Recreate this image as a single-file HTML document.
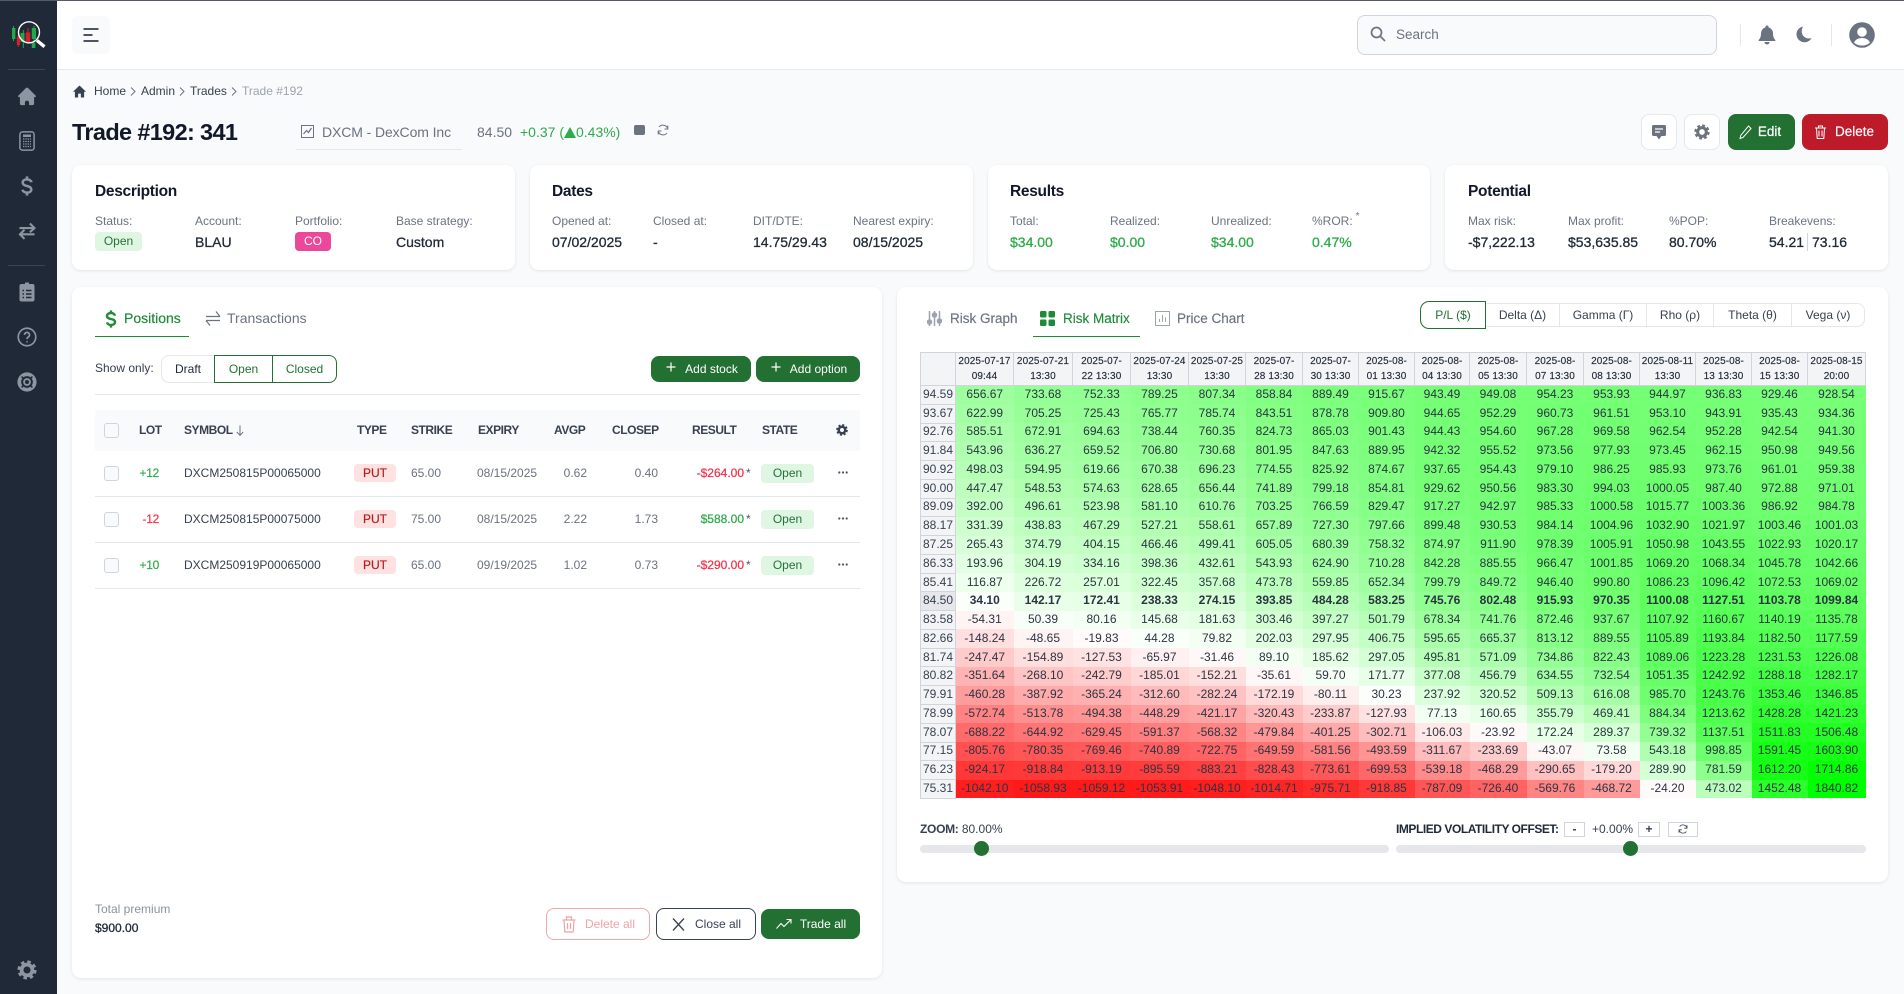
<!DOCTYPE html>
<html lang="en"><head><meta charset="utf-8"><title>Trade #192</title>
<style>
*{box-sizing:border-box}
html,body{margin:0;padding:0}
body{width:1904px;height:994px;overflow:hidden;position:relative;background:#f9fafb;font-family:"Liberation Sans",sans-serif;color:#1f2937;font-size:12px}
.a,.t,svg.i{position:absolute}
.t{white-space:nowrap;line-height:16px}
.card{position:absolute;background:#fff;border-radius:9px;box-shadow:0 1px 3px rgba(0,0,0,.09)}
.h{font-size:15.5px;font-weight:700;color:#111827;letter-spacing:-.3px}
.l{font-size:12px;color:#6b7280}
.v{font-size:14px;color:#1f2937;-webkit-text-stroke:.3px}
.g{color:#2eab4a}
.b{position:absolute;text-align:center;border-radius:4px;line-height:19px;height:19px;font-size:12px}
.open{background:#dff6e3;color:#25713a}
.btn{position:absolute;border-radius:8px;text-align:center;white-space:nowrap}
.th{font-size:12px;font-weight:700;color:#374151;letter-spacing:-.45px}
.sym{font-size:12px;color:#374151}
.mut{font-size:12px;color:#6b7280}
.cb{position:absolute;left:104px;width:15px;height:15px;border:1px solid #d1d5db;border-radius:3px;background:#f9fafb}
.ln{position:absolute;left:95px;width:765px;height:1px;background:#e5e7eb}
.seg{position:absolute;top:303px;height:24px;line-height:23px;text-align:center;font-size:12px;color:#374151;background:#fff;border:1px solid #e5e7eb;border-left:none}
.sq{position:absolute;top:822px;height:15px;border:1px solid #d1d5db;text-align:center;line-height:13px;font-size:12px;color:#374151;font-weight:700}
table{position:absolute;left:920px;top:352px;width:945px;table-layout:fixed;border-collapse:collapse}
th,td{padding:0;text-align:center;white-space:nowrap}
thead th{height:33px;font-size:10px;letter-spacing:.1px;line-height:15px;font-weight:400;background:#f3f4f6;border:1px solid #d1d5db;color:#1f2937;-webkit-text-stroke:.15px}
tbody tr{height:18.77px}
tbody th{font-size:12px;font-weight:400;background:#f3f4f6;border:1px solid #d1d5db;color:#374151;line-height:14px;padding-bottom:2px}
td{font-size:12px;line-height:14px;color:#2b3442;padding-bottom:2px}
tr.cur th{background:#e5e7eb}
tr.cur td{font-weight:700}
</style></head><body>

<div class="a" style="left:0;top:0;width:1904px;height:70px;background:#fff;border-bottom:1px solid #e5e7eb"></div>
<div class="a" style="left:0;top:0;width:1904px;height:1px;background:#555b66;z-index:5"></div>

<!-- sidebar -->
<div class="a" style="left:0;top:0;width:57px;height:994px;background:#1f2937"></div>
<svg class="i" style="left:0;top:0" width="57" height="60" viewBox="0 0 57 60">
<path d="M13.5 26v15" stroke="#22a846" stroke-width="1"/><rect x="12" y="28" width="3.4" height="11" fill="#22a846"/>
<path d="M18.3 34v13" stroke="#d81e2c" stroke-width="1"/><rect x="16.8" y="36.5" width="3.2" height="8.5" fill="#d81e2c"/>
<path d="M23.3 30v18" stroke="#22a846" stroke-width="1"/><rect x="20.5" y="33" width="4" height="9" fill="#22a846"/>
<path d="M28 28v16" stroke="#d81e2c" stroke-width="1"/><rect x="25.7" y="32.5" width="4.5" height="9.5" fill="#d81e2c"/>
<path d="M34 26v22" stroke="#22a846" stroke-width="1"/><rect x="31.8" y="28" width="4.2" height="11" fill="#22a846"/><rect x="31.8" y="43" width="3.6" height="5" fill="#22a846"/>
<circle cx="29" cy="32.3" r="10.5" fill="none" stroke="#fff" stroke-width="1.4"/>
<path d="M37 40.5l7.5 6.2" stroke="#fff" stroke-width="3.4"/>
</svg>
<div class="a" style="left:8px;top:69px;width:37px;height:1px;background:#3a4553"></div>
<div class="a" style="left:8px;top:265px;width:37px;height:1px;background:#3a4553"></div>

<svg class="i" style="left:17px;top:86px" width="20" height="20" viewBox="0 0 24 24" fill="#8d95a2"><path d="M10.6 2.6a2 2 0 0 1 2.8 0L23 12.2l-1.6 1.6-.9-.9V21a2 2 0 0 1-2 2h-4v-3a2.5 2.5 0 0 0-5 0v3h-4a2 2 0 0 1-2-2v-8.100l-.9.9L1 12.200z"/></svg>
<svg class="i" style="left:19px;top:131px" width="16" height="20" viewBox="0 0 16 20"><rect x=".9" y=".9" width="14.200" height="18.200" rx="2.500" fill="none" stroke="#8d95a2" stroke-width="1.500"/><rect x="4" y="3.500" width="8" height="2.500" fill="#8d95a2"/><path d="M4 8h8M4 10.500h8M4 13h8M4 15.500h8" stroke="#8d95a2" stroke-width="1.200" stroke-dasharray="1.400 .9"/></svg>
<svg class="i" style="left:17px;top:176px" width="20" height="20" viewBox="0 0 24 24" fill="none" stroke="#8d95a2" stroke-width="3"><path d="M17.500 7.500C17 5.500 14.500 4 12 4 9 4 6.800 5.600 6.800 8c0 2.600 2.400 3.400 5.200 4 2.800.6 5.200 1.400 5.200 4 0 2.400-2.200 4-5.200 4-2.500 0-5-1.500-5.500-3.500M12 .5V4M12 20v3.500"/></svg>
<svg class="i" style="left:17px;top:221px" width="20" height="20" viewBox="0 0 24 24" fill="none" stroke="#8d95a2" stroke-width="2.500"><path d="M3 8.500h18M15.500 3l5.500 5.500-5.500 5M21 16H3.500M9 10.500 3.500 16 9 21.500"/></svg>
<svg class="i" style="left:19px;top:282px" width="16" height="20" viewBox="0 0 16 20"><path d="M6 .5h4V2h3.500A2 2 0 0 1 15.500 4v13.500a2 2 0 0 1-2 2h-11a2 2 0 0 1-2-2V4a2 2 0 0 1 2-2H6z" fill="#8d95a2"/><path d="M3.500 8.500h1.500M7 8.500h5.500M3.500 12h1.500M7 12h5.500M3.500 15.500h1.500M7 15.500h5.500" stroke="#1f2937" stroke-width="1.500"/></svg>
<svg class="i" style="left:17px;top:327px" width="20" height="20" viewBox="0 0 24 24" fill="none" stroke="#8d95a2" stroke-width="2"><circle cx="12" cy="12" r="10.500"/><path d="M9 9.500a3 3 0 1 1 4.500 2.600c-1 .6-1.500 1.200-1.500 2.400M12 17v1.500"/></svg>
<svg class="i" style="left:17px;top:372px" width="20" height="20" viewBox="0 0 24 24"><circle cx="12" cy="12" r="11.500" fill="#8d95a2"/><circle cx="12" cy="12" r="5.800" fill="none" stroke="#1f2937" stroke-width="2.400"/><path d="M5.500 5.500l2 2M18.500 5.500l-2 2M5.500 18.500l2-2M18.500 18.500l-2-2" stroke="#1f2937" stroke-width="1.800"/><circle cx="12" cy="12" r="2.400" fill="#1f2937"/></svg>
<svg class="i" style="left:17px;top:960px" width="20" height="20" viewBox="0 0 24 24" fill="none" stroke="#8d95a2"><circle cx="12" cy="12" r="6.500" stroke-width="4.500"/><circle cx="12" cy="12" r="9.800" stroke-width="3.400" stroke-dasharray="4.200 3.500"/></svg>

<!-- header -->
<div class="a" style="left:72px;top:16px;width:38px;height:38px;background:#f9fafb;border-radius:6px"></div>
<svg class="i" style="left:83px;top:27px" width="17" height="16" viewBox="0 0 17 16" fill="none" stroke="#4b5563" stroke-width="2"><path d="M.5 2h15M.5 8h9M.5 14h15"/></svg>
<div class="a" style="left:1357px;top:15px;width:360px;height:40px;background:#f9fafb;border:1px solid #d1d5db;border-radius:8px"></div>
<svg class="i" style="left:1370px;top:26px" width="16" height="16" viewBox="0 0 16 16" fill="none" stroke="#6b7280" stroke-width="1.700"><circle cx="6.500" cy="6.500" r="5"/><path d="M10.200 10.200 15 15"/></svg>
<div class="t" style="left:1396px;top:26px;font-size:13.500px;line-height:17px;color:#6b7280">Search</div>
<div class="a" style="left:1740px;top:24px;width:1px;height:22px;background:#e5e7eb"></div>
<div class="a" style="left:1831px;top:24px;width:1px;height:22px;background:#e5e7eb"></div>
<svg class="i" style="left:1758px;top:25px" width="18" height="20" viewBox="0 0 18 20" fill="#6b7280"><path d="M9 .5a1.500 1.500 0 0 1 1.500 1.500v.4A6 6 0 0 1 15 8.300c0 3.500 1 5.400 2.300 6.700.4.400.2 1-.4 1H1.100c-.6 0-.8-.6-.4-1C2 13.700 3 11.800 3 8.300a6 6 0 0 1 4.500-5.900V2A1.500 1.500 0 0 1 9 .5z"/><path d="M6.500 17h5a2.500 2.500 0 0 1-5 0z"/></svg>
<svg class="i" style="left:1796px;top:26px" width="16" height="17" viewBox="0 0 16 17" fill="#6b7280"><path d="M7 .5C3.300 1.200.5 4.400.5 8.300c0 4.400 3.600 8 8 8 3 0 5.700-1.700 7-4.200-.8.300-1.700.4-2.600.4-4 0-7.200-3.300-7.200-7.300C5.700 3.500 6.200 1.900 7 .5z"/></svg>
<svg class="i" style="left:1849px;top:22px" width="26" height="26" viewBox="0 0 26 26"><circle cx="13" cy="13" r="12.800" fill="#6b7280"/><circle cx="13" cy="10" r="4.800" fill="#fff"/><path d="M5 20.500c1.500-3 4.500-4.500 8-4.500s6.500 1.500 8 4.500c-2 2-5 3-8 3s-6-1-8-3z" fill="#fff"/></svg>

<!-- breadcrumb -->
<svg class="i" style="left:73px;top:85px" width="13" height="13" viewBox="0 0 24 24" fill="#374151"><path d="M12 1 24 12.500h-3.500V23h-6v-7h-5v7h-6V12.500H0z"/></svg>
<div class="t" style="left:94px;top:83px;color:#374151">Home</div>
<div class="t" style="left:141px;top:83px;color:#374151">Admin</div>
<div class="t" style="left:190px;top:83px;color:#374151">Trades</div>
<div class="t" style="left:242px;top:83px;color:#9ca3af">Trade #192</div>
<svg class="i" style="left:130px;top:87px" width="6" height="9" viewBox="0 0 6 9" fill="none" stroke="#6b7280"><path d="M1 .5l4 4-4 4"/></svg>
<svg class="i" style="left:179px;top:87px" width="6" height="9" viewBox="0 0 6 9" fill="none" stroke="#6b7280"><path d="M1 .5l4 4-4 4"/></svg>
<svg class="i" style="left:231px;top:87px" width="6" height="9" viewBox="0 0 6 9" fill="none" stroke="#6b7280"><path d="M1 .5l4 4-4 4"/></svg>

<!-- title row -->
<div class="t" style="left:72px;top:118px;font-size:23.500px;line-height:28px;font-weight:700;color:#111827;letter-spacing:-.65px">Trade #192: 341</div>
<svg class="i" style="left:301px;top:125px" width="13" height="13" viewBox="0 0 13 13" fill="none" stroke="#6b7280"><path d="M.5.500h12v12H.5z"/><path d="M2.500 9 5.500 5.500l2 2 3-4.500" stroke-width="1.200"/></svg>
<div class="t" style="left:322px;top:124px;font-size:14px;color:#6b7280;letter-spacing:-.1px">DXCM - DexCom Inc</div>
<div class="a" style="left:296px;top:149px;width:166px;height:1px;background:#e5e7eb"></div>
<div class="t" style="left:477px;top:124px;font-size:14px;color:#6b7280">84.50</div>
<div class="t g" style="left:520px;top:124px;font-size:14px">+0.37 (<span style="display:inline-block;width:0;height:0;border-left:6px solid transparent;border-right:6px solid transparent;border-bottom:11px solid #2eab4a;margin:0 0 -1px 0"></span>0.43%)</div>
<div class="a" style="left:634px;top:125px;width:11px;height:10px;background:#6b7280;border-radius:2px"></div>
<svg class="i" style="left:657px;top:124px" width="12" height="12" viewBox="0 0 12 12" fill="none" stroke="#6b7280"><path d="M10.800 5A5 5 0 0 0 2 3M1.200 7A5 5 0 0 0 10 9M10.800 1.500V5H7.500M1.200 10.500V7h3.300"/></svg>

<div class="btn" style="left:1641px;top:114px;width:36px;height:36px;background:#fff;border:1px solid #e5e7eb"></div>
<svg class="i" style="left:1652px;top:125px" width="14" height="15" viewBox="0 0 14 15" fill="#6b7280"><path d="M1.500 0h11A1.500 1.500 0 0 1 14 1.500v8a1.500 1.500 0 0 1-1.500 1.500H9.500L7 14.500 4.500 11h-3A1.500 1.500 0 0 1 0 9.500v-8A1.500 1.500 0 0 1 1.500 0z"/><path d="M3 4h8M3 7h5" stroke="#fff" stroke-width="1.300"/></svg>
<div class="btn" style="left:1684px;top:114px;width:36px;height:36px;background:#fff;border:1px solid #e5e7eb"></div>
<svg class="i" style="left:1694px;top:124px" width="16" height="16" viewBox="0 0 24 24" fill="none" stroke="#6b7280"><circle cx="12" cy="12" r="6.500" stroke-width="4.500"/><circle cx="12" cy="12" r="9.800" stroke-width="3.400" stroke-dasharray="4.200 3.500"/></svg>
<div class="btn" style="left:1728px;top:114px;width:67px;height:36px;background:#237033;color:#fff;font-size:13.5px;line-height:36px;padding-left:16px;-webkit-text-stroke:.2px">Edit</div>
<svg class="i" style="left:1739px;top:125px" width="13" height="14" viewBox="0 0 13 14" fill="none" stroke="#fff"><path d="M9.500 1 12 3.500 4 12.500l-3 1 .8-3.200z"/></svg>
<div class="btn" style="left:1802px;top:114px;width:86px;height:36px;background:#bd1a2a;color:#fff;font-size:13.5px;line-height:36px;padding-left:19px;-webkit-text-stroke:.2px">Delete</div>
<svg class="i" style="left:1815px;top:125px" width="11" height="14" viewBox="0 0 11 14" fill="none" stroke="#fff"><path d="M0 3h11M3.500 3V1h4v2M1.500 3l.7 10.500h6.600L9.500 3M4 5.500v6M7 5.500v6"/></svg>

<!-- cards -->
<div class="card" style="left:72px;top:165px;width:443px;height:105px"></div>
<div class="card" style="left:530px;top:165px;width:443px;height:105px"></div>
<div class="card" style="left:988px;top:165px;width:442px;height:105px"></div>
<div class="card" style="left:1445px;top:165px;width:443px;height:105px"></div>

<div class="t h" style="left:95px;top:184px">Description</div>
<div class="t l" style="left:95px;top:213px">Status:</div>
<div class="t l" style="left:195px;top:213px">Account:</div>
<div class="t l" style="left:295px;top:213px">Portfolio:</div>
<div class="t l" style="left:396px;top:213px">Base strategy:</div>
<div class="b open" style="left:95px;top:232px;width:47px">Open</div>
<div class="t v" style="left:195px;top:234px">BLAU</div>
<div class="b" style="left:295px;top:232px;width:36px;background:#ec4899;color:#fff">CO</div>
<div class="t v" style="left:396px;top:234px">Custom</div>

<div class="t h" style="left:552px;top:184px">Dates</div>
<div class="t l" style="left:552px;top:213px">Opened at:</div>
<div class="t l" style="left:653px;top:213px">Closed at:</div>
<div class="t l" style="left:753px;top:213px">DIT/DTE:</div>
<div class="t l" style="left:853px;top:213px">Nearest expiry:</div>
<div class="t v" style="left:552px;top:234px">07/02/2025</div>
<div class="t v" style="left:653px;top:234px">-</div>
<div class="t v" style="left:753px;top:234px">14.75/29.43</div>
<div class="t v" style="left:853px;top:234px">08/15/2025</div>

<div class="t h" style="left:1010px;top:184px">Results</div>
<div class="t l" style="left:1010px;top:213px">Total:</div>
<div class="t l" style="left:1110px;top:213px">Realized:</div>
<div class="t l" style="left:1211px;top:213px">Unrealized:</div>
<div class="t l" style="left:1312px;top:213px">%ROR:<span style="position:relative;top:-6px;left:3px;font-size:10px">*</span></div>
<div class="t v g" style="left:1010px;top:234px">$34.00</div>
<div class="t v g" style="left:1110px;top:234px">$0.00</div>
<div class="t v g" style="left:1211px;top:234px">$34.00</div>
<div class="t v g" style="left:1312px;top:234px">0.47%</div>

<div class="t h" style="left:1468px;top:184px">Potential</div>
<div class="t l" style="left:1468px;top:213px">Max risk:</div>
<div class="t l" style="left:1568px;top:213px">Max profit:</div>
<div class="t l" style="left:1669px;top:213px">%POP:</div>
<div class="t l" style="left:1769px;top:213px">Breakevens:</div>
<div class="t v" style="left:1468px;top:234px">-$7,222.13</div>
<div class="t v" style="left:1568px;top:234px">$53,635.85</div>
<div class="t v" style="left:1669px;top:234px">80.70%</div>
<div class="t v" style="left:1769px;top:234px">54.21</div>
<div class="a" style="left:1807px;top:233px;width:1px;height:18px;background:#d1d5db"></div>
<div class="t v" style="left:1812px;top:234px">73.16</div>

<!-- left panel -->
<div class="card" style="left:72px;top:287px;width:810px;height:691px"></div>
<svg class="i" style="left:103px;top:310px" width="16" height="18" viewBox="0 0 24 27" fill="none" stroke="#1f8a3a" stroke-width="3.600"><path d="M18 8.500C17.500 6 15 4.500 12 4.500 8.500 4.500 6 6.300 6 9c0 3 2.800 3.800 6 4.500 3.200.7 6 1.500 6 4.500 0 2.700-2.500 4.500-6 4.500-3 0-5.500-1.500-6-4M12 .5v4M12 22.500v4"/></svg>
<div class="t" style="left:124px;top:310px;font-size:14px;color:#1f8a3a;-webkit-text-stroke:.2px">Positions</div>
<div class="a" style="left:95px;top:336px;width:94px;height:1px;background:#1f8a3a"></div>
<svg class="i" style="left:205px;top:310px" width="16" height="17" viewBox="0 0 16 17" fill="none" stroke="#6b7280" stroke-width="1.200"><path d="M1 6.500h14M11 1.500l4 5M15 10.500H1M5 15.500l-4-5"/></svg>
<div class="t" style="left:227px;top:310px;font-size:14px;color:#6b7280">Transactions</div>

<div class="t" style="left:95px;top:360px;color:#374151">Show only:</div>
<div class="a" style="left:161px;top:355px;width:54px;height:28px;border:1px solid #e5e7eb;border-radius:8px 0 0 8px;text-align:center;line-height:26px;color:#1f2937;background:#fff">Draft</div>
<div class="a" style="left:214px;top:355px;width:59px;height:28px;border:1px solid #237033;text-align:center;line-height:26px;color:#237033;background:#fff">Open</div>
<div class="a" style="left:272px;top:355px;width:65px;height:28px;border:1px solid #237033;border-radius:0 8px 8px 0;text-align:center;line-height:26px;color:#237033;background:#fff">Closed</div>

<div class="btn" style="left:651px;top:356px;width:100px;height:26px;background:#237033;color:#fff;line-height:26px;padding-left:21px">Add stock</div>
<div class="btn" style="left:756px;top:356px;width:104px;height:26px;background:#237033;color:#fff;line-height:26px;padding-left:21px">Add option</div>
<svg class="i" style="left:666px;top:362px" width="10" height="10" viewBox="0 0 10 10" stroke="#fff" stroke-width="1.200"><path d="M5 .5v9M.5 5h9"/></svg>
<svg class="i" style="left:771px;top:362px" width="10" height="10" viewBox="0 0 10 10" stroke="#fff" stroke-width="1.200"><path d="M5 .5v9M.5 5h9"/></svg>
<div class="ln" style="top:394px"></div>

<div class="a" style="left:95px;top:410px;width:765px;height:41px;background:#f9fafb"></div>
<div class="cb" style="top:423px"></div>
<div class="t th" style="left:139px;top:422px">LOT</div>
<div class="t th" style="left:184px;top:422px">SYMBOL</div>
<svg class="i" style="left:236px;top:425px" width="8" height="11" viewBox="0 0 8 11" fill="none" stroke="#6b7280"><path d="M4 .5v9.500M.8 7 4 10.300 7.200 7"/></svg>
<div class="t th" style="left:357px;top:422px">TYPE</div>
<div class="t th" style="left:411px;top:422px">STRIKE</div>
<div class="t th" style="left:478px;top:422px">EXPIRY</div>
<div class="t th" style="left:554px;top:422px">AVGP</div>
<div class="t th" style="left:612px;top:422px">CLOSEP</div>
<div class="t th" style="left:692px;top:422px">RESULT</div>
<div class="t th" style="left:762px;top:422px">STATE</div>
<svg class="i" style="left:836px;top:424px" width="12" height="12" viewBox="0 0 24 24" fill="none" stroke="#374151"><circle cx="12" cy="12" r="6.500" stroke-width="5"/><circle cx="12" cy="12" r="9.800" stroke-width="3.800" stroke-dasharray="4.200 3.500"/></svg>

<!-- row 1 -->
<div class="cb" style="top:466px"></div>
<div class="t" style="left:129px;width:30px;text-align:right;top:465px;color:#2eab4a;-webkit-text-stroke:.2px;letter-spacing:-.3px">+12</div>
<div class="t sym" style="left:184px;top:465px">DXCM250815P00065000</div>
<div class="b" style="left:354px;top:464px;width:42px;height:18px;line-height:18px;background:#fee2e2;color:#b91c1c;-webkit-text-stroke:.2px">PUT</div>
<div class="t mut" style="left:411px;top:465px">65.00</div>
<div class="t mut" style="left:477px;top:465px">08/15/2025</div>
<div class="t mut" style="left:537px;width:50px;text-align:right;top:465px">0.62</div>
<div class="t mut" style="left:608px;width:50px;text-align:right;top:465px">0.40</div>
<div class="t" style="left:664px;width:80px;text-align:right;top:465px;color:#f43349;-webkit-text-stroke:.25px">-$264.00</div>
<div class="t" style="left:746px;top:465px;color:#4b5563">*</div>
<div class="b open" style="left:761px;top:464px;width:53px">Open</div>
<svg class="i" style="left:838px;top:471px" width="10" height="3" viewBox="0 0 10 3" fill="#4b5563"><circle cx="1.300" cy="1.500" r="1.100"/><circle cx="5" cy="1.500" r="1.100"/><circle cx="8.700" cy="1.500" r="1.100"/></svg>
<div class="ln" style="top:496px"></div>
<!-- row 2 -->
<div class="cb" style="top:512px"></div>
<div class="t" style="left:129px;width:30px;text-align:right;top:511px;color:#f43349;-webkit-text-stroke:.2px;letter-spacing:-.3px">-12</div>
<div class="t sym" style="left:184px;top:511px">DXCM250815P00075000</div>
<div class="b" style="left:354px;top:510px;width:42px;height:18px;line-height:18px;background:#fee2e2;color:#b91c1c;-webkit-text-stroke:.2px">PUT</div>
<div class="t mut" style="left:411px;top:511px">75.00</div>
<div class="t mut" style="left:477px;top:511px">08/15/2025</div>
<div class="t mut" style="left:537px;width:50px;text-align:right;top:511px">2.22</div>
<div class="t mut" style="left:608px;width:50px;text-align:right;top:511px">1.73</div>
<div class="t" style="left:664px;width:80px;text-align:right;top:511px;color:#2eab4a;-webkit-text-stroke:.25px">$588.00</div>
<div class="t" style="left:746px;top:511px;color:#4b5563">*</div>
<div class="b open" style="left:761px;top:510px;width:53px">Open</div>
<svg class="i" style="left:838px;top:517px" width="10" height="3" viewBox="0 0 10 3" fill="#4b5563"><circle cx="1.300" cy="1.500" r="1.100"/><circle cx="5" cy="1.500" r="1.100"/><circle cx="8.700" cy="1.500" r="1.100"/></svg>
<div class="ln" style="top:542px"></div>
<!-- row 3 -->
<div class="cb" style="top:558px"></div>
<div class="t" style="left:129px;width:30px;text-align:right;top:557px;color:#2eab4a;-webkit-text-stroke:.2px;letter-spacing:-.3px">+10</div>
<div class="t sym" style="left:184px;top:557px">DXCM250919P00065000</div>
<div class="b" style="left:354px;top:556px;width:42px;height:18px;line-height:18px;background:#fee2e2;color:#b91c1c;-webkit-text-stroke:.2px">PUT</div>
<div class="t mut" style="left:411px;top:557px">65.00</div>
<div class="t mut" style="left:477px;top:557px">09/19/2025</div>
<div class="t mut" style="left:537px;width:50px;text-align:right;top:557px">1.02</div>
<div class="t mut" style="left:608px;width:50px;text-align:right;top:557px">0.73</div>
<div class="t" style="left:664px;width:80px;text-align:right;top:557px;color:#f43349;-webkit-text-stroke:.25px">-$290.00</div>
<div class="t" style="left:746px;top:557px;color:#4b5563">*</div>
<div class="b open" style="left:761px;top:556px;width:53px">Open</div>
<svg class="i" style="left:838px;top:563px" width="10" height="3" viewBox="0 0 10 3" fill="#4b5563"><circle cx="1.300" cy="1.500" r="1.100"/><circle cx="5" cy="1.500" r="1.100"/><circle cx="8.700" cy="1.500" r="1.100"/></svg>
<div class="ln" style="top:588px"></div>

<div class="t" style="left:95px;top:901px;color:#8b93a0">Total premium</div>
<div class="t" style="left:95px;top:920px;color:#1f2937;-webkit-text-stroke:.3px">$900.00</div>
<div class="btn" style="left:546px;top:908px;width:104px;height:32px;border:1px solid #f0a6aa;color:#efa3a8;line-height:30px;padding-left:24px;background:#fff">Delete all</div>
<svg class="i" style="left:562px;top:916px" width="14" height="17" viewBox="0 0 14 17" fill="none" stroke="#efa3a8" stroke-width="1.200"><path d="M.5 4h13M4.500 4V1h5v3M2 4l.8 12h8.400L12 4M5.500 7v6M8.500 7v6"/></svg>
<div class="btn" style="left:656px;top:908px;width:100px;height:32px;border:1px solid #374151;color:#374151;line-height:30px;padding-left:24px;background:#fff">Close all</div>
<svg class="i" style="left:672px;top:918px" width="13" height="13" viewBox="0 0 13 13" fill="none" stroke="#374151" stroke-width="1.300"><path d="M1 .5l11 12M12 .5l-11 12"/></svg>
<div class="btn" style="left:761px;top:909px;width:99px;height:30px;background:#237033;color:#fff;line-height:30px;padding-left:25px">Trade all</div>
<svg class="i" style="left:776px;top:918px" width="16" height="12" viewBox="0 0 16 12" fill="none" stroke="#fff" stroke-width="1.100"><path d="M.5 10.500 5 5.500l3 3L15 1.500M10.500 1.500H15v4"/></svg>

<!-- right panel -->
<div class="card" style="left:897px;top:287px;width:991px;height:595px"></div>
<svg class="i" style="left:927px;top:310px" width="15" height="17" viewBox="0 0 15 17" fill="none" stroke="#9ca3af" stroke-width="1.500"><path d="M2.500 1v15M7.500 1v15M12.500 1v15"/><circle cx="2.500" cy="12" r="2" fill="#9ca3af"/><circle cx="7.500" cy="5" r="2" fill="#9ca3af"/><circle cx="12.500" cy="11" r="2" fill="#9ca3af"/></svg>
<div class="t" style="left:950px;top:311px;font-size:13.5px;color:#6b7280;-webkit-text-stroke:.15px">Risk Graph</div>
<svg class="i" style="left:1040px;top:311px" width="15" height="15" viewBox="0 0 15 15" fill="#1f8a3a"><rect width="6.500" height="6.500" rx="1.200"/><rect x="8.500" width="6.500" height="6.500" rx="1.200"/><rect y="8.500" width="6.500" height="6.500" rx="1.200"/><rect x="8.500" y="8.500" width="6.500" height="6.500" rx="1.200"/></svg>
<div class="t" style="left:1063px;top:311px;font-size:13.5px;color:#1f8a3a;-webkit-text-stroke:.15px">Risk Matrix</div>
<div class="a" style="left:1033px;top:336px;width:107px;height:1px;background:#1f8a3a"></div>
<svg class="i" style="left:1155px;top:311px" width="15" height="15" viewBox="0 0 15 15" fill="none" stroke="#9ca3af"><path d="M.5.500h14v14H.5zM4.500 11V8M7.500 11V4M10.500 11V6.500"/></svg>
<div class="t" style="left:1177px;top:311px;font-size:13.5px;color:#6b7280;-webkit-text-stroke:.15px">Price Chart</div>

<div class="seg" style="left:1486px;width:74px">Delta (Δ)</div>
<div class="seg" style="left:1560px;width:87px">Gamma (Γ)</div>
<div class="seg" style="left:1647px;width:67px">Rho (ρ)</div>
<div class="seg" style="left:1714px;width:78px">Theta (θ)</div>
<div class="seg" style="left:1792px;width:73px;border-radius:0 8px 8px 0">Vega (ν)</div>
<div class="a" style="left:1420px;top:301px;width:66px;height:28px;border:1.500px solid #237033;border-radius:9px 0 0 9px;background:#fff;text-align:center;line-height:26px;color:#237033">P/L ($)</div>

<table id="m">
<colgroup><col style="width:35px"><col style="width:58px"><col style="width:59px"><col style="width:58px"><col style="width:58px"><col style="width:57px"><col style="width:57px"><col style="width:56px"><col style="width:56px"><col style="width:55px"><col style="width:57px"><col style="width:57px"><col style="width:56px"><col style="width:56px"><col style="width:56px"><col style="width:56px"><col style="width:58px"></colgroup>
<thead><tr><th></th><th>2025-07-17<br>09:44</th><th>2025-07-21<br>13:30</th><th>2025-07-<br>22 13:30</th><th>2025-07-24<br>13:30</th><th>2025-07-25<br>13:30</th><th>2025-07-<br>28 13:30</th><th>2025-07-<br>30 13:30</th><th>2025-08-<br>01 13:30</th><th>2025-08-<br>04 13:30</th><th>2025-08-<br>05 13:30</th><th>2025-08-<br>07 13:30</th><th>2025-08-<br>08 13:30</th><th>2025-08-11<br>13:30</th><th>2025-08-<br>13 13:30</th><th>2025-08-<br>15 13:30</th><th>2025-08-15<br>20:00</th></tr></thead>
<tbody>
<tr><th>94.59</th><td>656.67</td><td>733.68</td><td>752.33</td><td>789.25</td><td>807.34</td><td>858.84</td><td>889.49</td><td>915.67</td><td>943.49</td><td>949.08</td><td>954.23</td><td>953.93</td><td>944.97</td><td>936.83</td><td>929.46</td><td>928.54</td></tr>
<tr><th>93.67</th><td>622.99</td><td>705.25</td><td>725.43</td><td>765.77</td><td>785.74</td><td>843.51</td><td>878.78</td><td>909.80</td><td>944.65</td><td>952.29</td><td>960.73</td><td>961.51</td><td>953.10</td><td>943.91</td><td>935.43</td><td>934.36</td></tr>
<tr><th>92.76</th><td>585.51</td><td>672.91</td><td>694.63</td><td>738.44</td><td>760.35</td><td>824.73</td><td>865.03</td><td>901.43</td><td>944.43</td><td>954.60</td><td>967.28</td><td>969.58</td><td>962.54</td><td>952.28</td><td>942.54</td><td>941.30</td></tr>
<tr><th>91.84</th><td>543.96</td><td>636.27</td><td>659.52</td><td>706.80</td><td>730.68</td><td>801.95</td><td>847.63</td><td>889.95</td><td>942.32</td><td>955.52</td><td>973.56</td><td>977.93</td><td>973.45</td><td>962.15</td><td>950.98</td><td>949.56</td></tr>
<tr><th>90.92</th><td>498.03</td><td>594.95</td><td>619.66</td><td>670.38</td><td>696.23</td><td>774.55</td><td>825.92</td><td>874.67</td><td>937.65</td><td>954.43</td><td>979.10</td><td>986.25</td><td>985.93</td><td>973.76</td><td>961.01</td><td>959.38</td></tr>
<tr><th>90.00</th><td>447.47</td><td>548.53</td><td>574.63</td><td>628.65</td><td>656.44</td><td>741.89</td><td>799.18</td><td>854.81</td><td>929.62</td><td>950.56</td><td>983.30</td><td>994.03</td><td>1000.05</td><td>987.40</td><td>972.88</td><td>971.01</td></tr>
<tr><th>89.09</th><td>392.00</td><td>496.61</td><td>523.98</td><td>581.10</td><td>610.76</td><td>703.25</td><td>766.59</td><td>829.47</td><td>917.27</td><td>942.97</td><td>985.33</td><td>1000.58</td><td>1015.77</td><td>1003.36</td><td>986.92</td><td>984.78</td></tr>
<tr><th>88.17</th><td>331.39</td><td>438.83</td><td>467.29</td><td>527.21</td><td>558.61</td><td>657.89</td><td>727.30</td><td>797.66</td><td>899.48</td><td>930.53</td><td>984.14</td><td>1004.96</td><td>1032.90</td><td>1021.97</td><td>1003.46</td><td>1001.03</td></tr>
<tr><th>87.25</th><td>265.43</td><td>374.79</td><td>404.15</td><td>466.46</td><td>499.41</td><td>605.05</td><td>680.39</td><td>758.32</td><td>874.97</td><td>911.90</td><td>978.39</td><td>1005.91</td><td>1050.98</td><td>1043.55</td><td>1022.93</td><td>1020.17</td></tr>
<tr><th>86.33</th><td>193.96</td><td>304.19</td><td>334.16</td><td>398.36</td><td>432.61</td><td>543.93</td><td>624.90</td><td>710.28</td><td>842.28</td><td>885.55</td><td>966.47</td><td>1001.85</td><td>1069.20</td><td>1068.34</td><td>1045.78</td><td>1042.66</td></tr>
<tr><th>85.41</th><td>116.87</td><td>226.72</td><td>257.01</td><td>322.45</td><td>357.68</td><td>473.78</td><td>559.85</td><td>652.34</td><td>799.79</td><td>849.72</td><td>946.40</td><td>990.80</td><td>1086.23</td><td>1096.42</td><td>1072.53</td><td>1069.02</td></tr>
<tr class="cur"><th>84.50</th><td>34.10</td><td>142.17</td><td>172.41</td><td>238.33</td><td>274.15</td><td>393.85</td><td>484.28</td><td>583.25</td><td>745.76</td><td>802.48</td><td>915.93</td><td>970.35</td><td>1100.08</td><td>1127.51</td><td>1103.78</td><td>1099.84</td></tr>
<tr><th>83.58</th><td>-54.31</td><td>50.39</td><td>80.16</td><td>145.68</td><td>181.63</td><td>303.46</td><td>397.27</td><td>501.79</td><td>678.34</td><td>741.76</td><td>872.46</td><td>937.67</td><td>1107.92</td><td>1160.67</td><td>1140.19</td><td>1135.78</td></tr>
<tr><th>82.66</th><td>-148.24</td><td>-48.65</td><td>-19.83</td><td>44.28</td><td>79.82</td><td>202.03</td><td>297.95</td><td>406.75</td><td>595.65</td><td>665.37</td><td>813.12</td><td>889.55</td><td>1105.89</td><td>1193.84</td><td>1182.50</td><td>1177.59</td></tr>
<tr><th>81.74</th><td>-247.47</td><td>-154.89</td><td>-127.53</td><td>-65.97</td><td>-31.46</td><td>89.10</td><td>185.62</td><td>297.05</td><td>495.81</td><td>571.09</td><td>734.86</td><td>822.43</td><td>1089.06</td><td>1223.28</td><td>1231.53</td><td>1226.08</td></tr>
<tr><th>80.82</th><td>-351.64</td><td>-268.10</td><td>-242.79</td><td>-185.01</td><td>-152.21</td><td>-35.61</td><td>59.70</td><td>171.77</td><td>377.08</td><td>456.79</td><td>634.55</td><td>732.54</td><td>1051.35</td><td>1242.92</td><td>1288.18</td><td>1282.17</td></tr>
<tr><th>79.91</th><td>-460.28</td><td>-387.92</td><td>-365.24</td><td>-312.60</td><td>-282.24</td><td>-172.19</td><td>-80.11</td><td>30.23</td><td>237.92</td><td>320.52</td><td>509.13</td><td>616.08</td><td>985.70</td><td>1243.76</td><td>1353.46</td><td>1346.85</td></tr>
<tr><th>78.99</th><td>-572.74</td><td>-513.78</td><td>-494.38</td><td>-448.29</td><td>-421.17</td><td>-320.43</td><td>-233.87</td><td>-127.93</td><td>77.13</td><td>160.65</td><td>355.79</td><td>469.41</td><td>884.34</td><td>1213.62</td><td>1428.28</td><td>1421.23</td></tr>
<tr><th>78.07</th><td>-688.22</td><td>-644.92</td><td>-629.45</td><td>-591.37</td><td>-568.32</td><td>-479.84</td><td>-401.25</td><td>-302.71</td><td>-106.03</td><td>-23.92</td><td>172.24</td><td>289.37</td><td>739.32</td><td>1137.51</td><td>1511.83</td><td>1506.48</td></tr>
<tr><th>77.15</th><td>-805.76</td><td>-780.35</td><td>-769.46</td><td>-740.89</td><td>-722.75</td><td>-649.59</td><td>-581.56</td><td>-493.59</td><td>-311.67</td><td>-233.69</td><td>-43.07</td><td>73.58</td><td>543.18</td><td>998.85</td><td>1591.45</td><td>1603.90</td></tr>
<tr><th>76.23</th><td>-924.17</td><td>-918.84</td><td>-913.19</td><td>-895.59</td><td>-883.21</td><td>-828.43</td><td>-773.61</td><td>-699.53</td><td>-539.18</td><td>-468.29</td><td>-290.65</td><td>-179.20</td><td>289.90</td><td>781.59</td><td>1612.20</td><td>1714.86</td></tr>
<tr><th>75.31</th><td>-1042.10</td><td>-1058.93</td><td>-1059.12</td><td>-1053.91</td><td>-1048.10</td><td>-1014.71</td><td>-975.71</td><td>-918.85</td><td>-787.09</td><td>-726.40</td><td>-569.76</td><td>-468.72</td><td>-24.20</td><td>473.02</td><td>1452.48</td><td>1840.82</td></tr>
</tbody></table>
<script>
document.querySelectorAll('#m td').forEach(function(c){
var v=parseFloat(c.textContent),m,k;
if(v>=0){m=Math.min(1,v/1750);k=Math.round(255*(1-m));c.style.background='rgb('+k+',255,'+k+')';}
else{m=Math.min(1,-v/1180);k=Math.round(255*(1-m));c.style.background='rgb(255,'+k+','+k+')';}
});
</script>

<div class="t" style="left:920px;top:821px;color:#374151"><b style="letter-spacing:-.3px">ZOOM:</b> 80.00%</div>
<div class="a" style="left:920px;top:845px;width:469px;height:8px;background:#e5e7eb;border-radius:4px"></div>
<div class="a" style="left:974px;top:841px;width:15px;height:15px;background:#237033;border-radius:50%"></div>

<div class="t" style="left:1396px;top:821px;color:#1f2937;font-weight:700;letter-spacing:-.45px">IMPLIED VOLATILITY OFFSET:</div>
<div class="sq" style="left:1564px;width:21px">-</div>
<div class="t" style="left:1592px;top:821px;color:#374151">+0.00%</div>
<div class="sq" style="left:1638px;width:22px">+</div>
<div class="sq" style="left:1668px;width:30px"></div>
<svg class="i" style="left:1678px;top:824px" width="10" height="10" viewBox="0 0 12 12" fill="none" stroke="#374151"><path d="M10.800 5A5 5 0 0 0 2 3M1.200 7A5 5 0 0 0 10 9M10.800 1.500V5H7.500M1.200 10.500V7h3.300"/></svg>
<div class="a" style="left:1396px;top:845px;width:470px;height:8px;background:#e5e7eb;border-radius:4px"></div>
<div class="a" style="left:1623px;top:841px;width:15px;height:15px;background:#237033;border-radius:50%"></div>
</body></html>
